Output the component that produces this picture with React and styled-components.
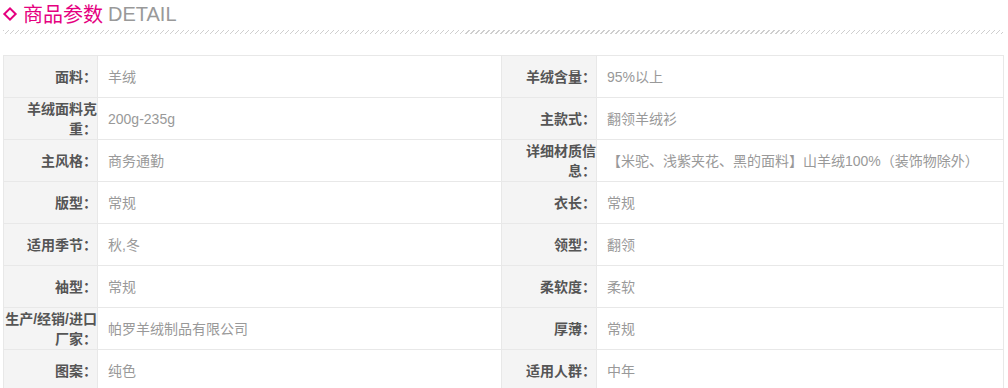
import React from "react";
import styled, { createGlobalStyle } from "styled-components";

const Global = createGlobalStyle`
  html, body { margin: 0; padding: 0; background: #fff; }
  body { font-family: "Liberation Sans", "Noto Sans CJK SC", sans-serif; }
`;

const Wrap = styled.div`
  width: 1000px;
  margin-left: 3px;
`;

const Header = styled.div`
  display: flex;
  align-items: center;
  height: 27px;
`;

const Diamond = styled.span`
  display: inline-block;
  width: 6px;
  height: 6px;
  border: 2.5px solid #e5007f;
  transform: rotate(45deg);
  margin: 0 8px 0 2px;
`;

const Title = styled.span`
  font-family: "Noto Sans CJK SC", sans-serif;
  font-size: 20px;
  line-height: 24px;
  color: #e5007f;
`;

const Sub = styled.span`
  font-family: "Liberation Sans", sans-serif;
  font-size: 20px;
  line-height: 24px;
  color: #999;
  margin-left: 5px;
`;

const Hatch = styled.div`
  height: 4px;
  margin-top: 3px;
  background: repeating-linear-gradient(
    135deg,
    #cfcfcf 0 1px,
    transparent 1px 3.54px
  );
`;

const Table = styled.table`
  margin-top: 21px;
  width: 1000px;
  border-collapse: collapse;
  table-layout: fixed;
  font-size: 14px;
`;

const Row = styled.tr`
  height: 42px;
`;

const Label = styled.td`
  background: #f4f4f4;
  border: 1px solid #e8e8e8;
  padding: 0;
  text-align: right;
  font-weight: bold;
  color: #555;
  line-height: 20px;
  vertical-align: middle;
`;

const Value = styled.td`
  border: 1px solid #e8e8e8;
  padding: 0 0 0 10px;
  color: #999;
  line-height: 20px;
  vertical-align: middle;
`;

const rows = [
  ["面料：", "羊绒", "羊绒含量：", "95%以上"],
  ["羊绒面料克重：", "200g-235g", "主款式：", "翻领羊绒衫"],
  ["主风格：", "商务通勤", "详细材质信息：", "【米驼、浅紫夹花、黑的面料】山羊绒100%（装饰物除外）"],
  ["版型：", "常规", "衣长：", "常规"],
  ["适用季节：", "秋,冬", "领型：", "翻领"],
  ["袖型：", "常规", "柔软度：", "柔软"],
  ["生产/经销/进口厂家：", "帕罗羊绒制品有限公司", "厚薄：", "常规"],
  ["图案：", "纯色", "适用人群：", "中年"],
];

export default function App() {
  return (
    <Wrap>
      <Global />
      <Header>
        <Diamond />
        <Title>商品参数</Title>
        <Sub>DETAIL</Sub>
      </Header>
      <Hatch />
      <Table>
        <colgroup>
          <col style={{ width: 94 }} />
          <col style={{ width: 404 }} />
          <col style={{ width: 95 }} />
          <col style={{ width: 407 }} />
        </colgroup>
        <tbody>
          {rows.map((r, i) => (
            <Row key={i}>
              <Label>{r[0]}</Label>
              <Value>{r[1]}</Value>
              <Label>{r[2]}</Label>
              <Value>{r[3]}</Value>
            </Row>
          ))}
        </tbody>
      </Table>
    </Wrap>
  );
}
